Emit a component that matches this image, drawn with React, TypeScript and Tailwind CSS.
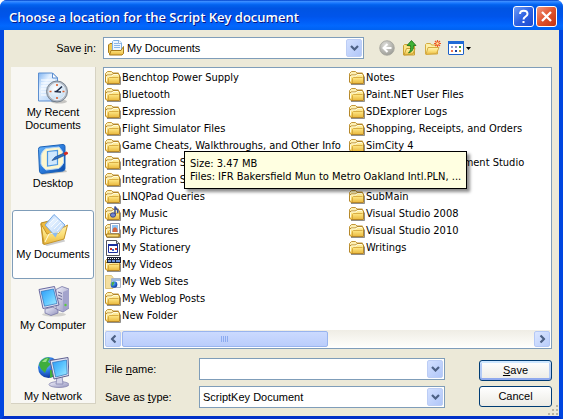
import { useState } from "react";
import type { ReactNode } from "react";

type IconProps = { className?: string };

/* Gradients shared by every icon in the dialog. */
function SharedGradients() {
  return (
    <svg className="absolute size-0" aria-hidden="true">
      <defs>
        <linearGradient id="gold" x1="0" y1="0" x2="0" y2="1">
          <stop offset="0" stopColor="#fff3b0" />
          <stop offset="0.5" stopColor="#fbe07a" />
          <stop offset="1" stopColor="#e9b73c" />
        </linearGradient>
        <linearGradient id="paper" x1="0" y1="0" x2="1" y2="1">
          <stop offset="0" stopColor="#7fb4f2" />
          <stop offset="0.35" stopColor="#e3f0ff" />
          <stop offset="1" stopColor="#a9ccf6" />
        </linearGradient>
        <linearGradient id="screen" x1="0" y1="0" x2="1" y2="1">
          <stop offset="0" stopColor="#2f9bf5" />
          <stop offset="0.5" stopColor="#5cc5ff" />
          <stop offset="1" stopColor="#a6ecff" />
        </linearGradient>
        <linearGradient id="metal" x1="0" y1="0" x2="1" y2="1">
          <stop offset="0" stopColor="#f1f1fb" />
          <stop offset="1" stopColor="#9292bd" />
        </linearGradient>
        <linearGradient id="blueEdge" x1="0" y1="0" x2="1" y2="1">
          <stop offset="0" stopColor="#6db8fb" />
          <stop offset="0.5" stopColor="#2b7bdc" />
          <stop offset="1" stopColor="#0b4aa8" />
        </linearGradient>
        <radialGradient id="clock" cx="0.4" cy="0.35" r="0.7">
          <stop offset="0" stopColor="#ffffff" />
          <stop offset="1" stopColor="#c3def5" />
        </radialGradient>
        <radialGradient id="globe" cx="0.35" cy="0.3" r="0.75">
          <stop offset="0" stopColor="#8fd0ff" />
          <stop offset="0.5" stopColor="#2d7be4" />
          <stop offset="1" stopColor="#0a2f96" />
        </radialGradient>
        <radialGradient id="greyBall" cx="0.4" cy="0.3" r="0.75">
          <stop offset="0" stopColor="#dededa" />
          <stop offset="1" stopColor="#9a9a94" />
        </radialGradient>
      </defs>
    </svg>
  );
}

function FolderShape() {
  return (
    <>
      <path d="M2 14.500h13.500v-8" stroke="#77746e" fill="none" opacity="0.800" />
      <path d="M0.500 12V3.500L2.500 1.500h4l1.500 1.500h5.500v3" fill="#fdf0b4" stroke="#c3973a" />
      <path d="M0.500 12V6.500L2 5h4.500l1.500-1.500h5l1.500 1.500v8.500h-12.500z" fill="url(#gold)" stroke="#b5872a" />
      <path d="M1.500 11.500V6.800l1-0.800h4.500l1.500-1.500h4.500" fill="none" stroke="#fffbe0" />
      <path d="M3.500 13V8.500L4.500 7.500h9" fill="none" stroke="#cf9f35" strokeWidth="0.800" />
    </>
  );
}

function SmallIcon({ children, className = "" }: { children: ReactNode; className?: string }) {
  return (
    <svg viewBox="0 0 16 16" className={`size-4 shrink-0 ${className}`} aria-hidden="true">
      {children}
    </svg>
  );
}

const FolderIcon = () => (
  <SmallIcon>
    <FolderShape />
  </SmallIcon>
);

const MusicIcon = () => (
  <SmallIcon>
    <FolderShape />
    <path d="M10 9V0.500c0.500 2.500 4.500 3 2.500 6.500" fill="none" stroke="#3c4f98" strokeWidth="1.500" />
    <ellipse cx="8" cy="9" rx="2.600" ry="2.200" fill="#7387d0" stroke="#2a3783" strokeWidth="0.800" />
  </SmallIcon>
);

const PicturesIcon = () => (
  <SmallIcon>
    <FolderShape />
    <path d="M5.500 0.500h9v10h-9z" fill="#fff" stroke="#8b95ad" />
    <path d="M7 2h6v7H7z" fill="#8fc4f5" />
    <path d="M7.500 9c0-2 0-4.500 2.500-4.500S12.500 7 12.500 9z" fill="#d5653f" />
    <path d="M1.500 14v-3h12.500v3z" fill="#f7d978" stroke="#a87b1b" />
  </SmallIcon>
);

const StationeryIcon = () => (
  <SmallIcon>
    <path d="M1.500 0.500h10l3 3v12h-13z" fill="#fff" stroke="#55555c" />
    <path d="M11.500 0.500v3h3" fill="#ddd" stroke="#55555c" />
    <path d="M3.500 4.500h9v8h-9z" fill="#fff" stroke="#1b2f9c" />
    <path d="M3 4h10v2H3z" fill="#1b2f9c" />
    <path d="M5 8h2v2H5z" fill="#c6342b" />
    <path d="M7 9h2v2H7z" fill="#3b62cf" />
    <path d="M10 8h2v2h-2z" fill="#c6342b" />
  </SmallIcon>
);

const VideosIcon = () => (
  <SmallIcon>
    <FolderShape />
    <path d="M2 0h14v6H2z" fill="#1d2233" />
    <path d="M3 1h1v1H3zM5 1h1v1H5zM7 1h1v1H7zM9 1h1v1H9zM11 1h1v1h-1zM13 1h1v1h-1z" fill="#fff" />
    <path d="M3 3h3v2H3zM7 3h3v2H7zM11 3h4v2h-4z" fill="#6b93d8" />
  </SmallIcon>
);

const WebSitesIcon = () => (
  <SmallIcon>
    <path d="M0.500 14.500V1.500h6l1.500 2v11z" fill="#f3dfa0" stroke="#dcc47c" />
    <path d="M6.500 4.500h9v9h-9z" fill="#f4f7fc" stroke="#a9b4c4" />
    <path d="M7 5h8v2H7z" fill="#9db9df" />
    <circle cx="9" cy="10.500" r="3.300" fill="url(#globe)" />
    <path d="M6.500 9c2-2 3-1 3 0s-2 1-1 3c-2 0-2-2-2-3z" fill="#4aa84a" />
  </SmallIcon>
);

const DocumentsIcon = ({ className = "" }: IconProps) => (
  <SmallIcon className={className}>
    <path d="M0.500 5L2 3.500h3v11H2.500l-2-2z" fill="#f1c954" stroke="#a87b1b" />
    <path d="M4.500 12.500v-11l1-1h5.500l2.500 2.500v9.500z" fill="#eef6ff" stroke="#7fb0e4" />
    <path d="M6 3.500h4M6 5.500h6M6 7.500h6" stroke="#8ab6e8" />
    <path d="M10.500 0.500v3h3" fill="#fff" stroke="#6b9ad2" strokeWidth="0.700" />
    <path d="M1.500 15L3 10.500h10l2.500-4v7L14 15z" fill="url(#gold)" stroke="#a87b1b" />
  </SmallIcon>
);

function LargeIcon({ children }: { children: ReactNode }) {
  return (
    <svg viewBox="0 0 32 32" className="size-8 shrink-0" aria-hidden="true">
      {children}
    </svg>
  );
}

const RecentIcon = () => (
  <LargeIcon>
    <path d="M1.500 1h14l5 5v23h-19z" fill="url(#paper)" stroke="#5d8fd0" />
    <path d="M15.500 1v5h5z" fill="#fff" stroke="#5d8fd0" />
    <path d="M4 8h14M4 11h10M4 14h7M4 17h6M4 20h6M4 23h8" stroke="#fff" strokeWidth="1.200" />
    <ellipse cx="22" cy="29.500" rx="8" ry="2" fill="#000" opacity="0.200" />
    <circle cx="20" cy="19.500" r="10.500" fill="#b3bcc8" stroke="#66727f" strokeWidth="0.800" />
    <circle cx="20" cy="19.500" r="8.200" fill="url(#clock)" stroke="#eef3f8" />
    <path d="M20 12v2M20 25v2M12.500 19.500h2M25.500 19.500h2" stroke="#e2602b" strokeWidth="1.600" />
    <path d="M25 14.500l-5.500 5M17.500 19.500l6.500 0.500" stroke="#1d2b45" strokeWidth="1.600" />
  </LargeIcon>
);

const DesktopIcon = () => (
  <LargeIcon>
    <path d="M3 30l26-3 1 2-25 3z" fill="#000" opacity="0.200" />
    <path d="M3 4L26 1.500q2 0 2 2v22q0 2-2 2.500L5 30.500q-2 0-2.500-2L1.500 6.500q0-2.300 1.500-2.500z" fill="url(#blueEdge)" stroke="#1b62b8" />
    <path d="M9 5.500L22 4q4 4 4.500 8v8q-2 4-5 5.500L9 27q-4-3-5-6v-9q1-4 5-6.500z" fill="#fdf7cf" stroke="#b9d8f5" />
    <path d="M10.500 8.500l10-1v14l-10 1.500z" fill="#cfe8fd" stroke="#4a97e2" strokeWidth="1.200" />
    <path d="M15 17.500l3-3.500 9-4 1.500 2-9 4z" fill="#2b6fc4" stroke="#15417e" strokeWidth="0.600" />
    <path d="M26.500 10l3-1.500q2 0.500 1.500 2.500L28 12.500z" fill="#d92b1f" />
  </LargeIcon>
);

const MyDocumentsIcon = () => (
  <LargeIcon>
    <path d="M6 30l21-5 1 2.500-18 4.500z" fill="#000" opacity="0.200" />
    <path d="M4 9l8-2 3 2 12 2v12L6 30z" fill="#eebc42" stroke="#b98a20" />
    <path d="M17 0.500L28 11 19 23 8 11z" fill="url(#paper)" stroke="#76a8e4" />
    <path d="M12 10l5-5M14 13l7-7M17 15l7-7M20 17l5-6" stroke="#fff" opacity="0.800" />
    <path d="M4 10l3 20.500L27 25l3.500-14-4.500 3-4 5-12 1z" fill="url(#gold)" stroke="#c6952b" />
    <path d="M8 28l4-8 10-1.500 5-5" fill="none" stroke="#fffbe2" />
    <path d="M15 19.200l6-0.800-2.500 5z" fill="#8dbcf0" />
  </LargeIcon>
);

const ComputerIcon = () => (
  <LargeIcon>
    <ellipse cx="17" cy="29.500" rx="12" ry="2" fill="#000" opacity="0.150" />
    <path d="M19 4.500l6-3 7 2.500v19l-6 4-7-3z" fill="url(#metal)" stroke="#7777a6" strokeWidth="0.800" />
    <path d="M26 7v19.500l6-4V4.500z" fill="#a3a3cc" />
    <path d="M21 7l4 1.500M21 10l4 1.500M21 13l4 1.500" stroke="#6a6a98" />
    <circle cx="28.500" cy="20" r="1.200" fill="#58cc3c" />
    <path d="M8 24l8-2 5 3v3l-7 2.500L8 28z" fill="url(#metal)" stroke="#7777a6" strokeWidth="0.800" />
    <path d="M2 4.500L17.500 1.500l4.500 18.500-16 3.500z" fill="#e4e4f3" stroke="#6969a0" />
    <path d="M4 6.500L16.500 4l3.500 14.500-12.500 2.700z" fill="url(#screen)" stroke="#2c6fb8" strokeWidth="0.700" />
  </LargeIcon>
);

const NetworkIcon = () => (
  <LargeIcon>
    <circle cx="11.500" cy="11.500" r="10.500" fill="url(#globe)" />
    <path d="M3 6q5-6 10-4l-2 4 3 2-4 4-2 5-4-4-2-4zM13 14l4 0v6l-4 2z" fill="#3fae3c" />
    <path d="M5 6q2-3 6-4l-2 4z" fill="#9be08a" />
    <ellipse cx="22" cy="28.500" rx="10" ry="3" fill="url(#metal)" stroke="#8484ae" strokeWidth="0.800" />
    <path d="M20 20h5l1 8h-7z" fill="#d3d3e8" stroke="#8484ae" strokeWidth="0.800" />
    <path d="M13 4.500L31 1.500l1 18-15 3.500z" fill="#e4e4f3" stroke="#5f6090" />
    <path d="M15.500 6.500l14-2.500 0.700 14-11.500 3z" fill="url(#screen)" stroke="#2c6fb8" strokeWidth="0.700" />
  </LargeIcon>
);

const BackIcon = () => (
  <SmallIcon>
    <circle cx="8" cy="8" r="7.300" fill="url(#greyBall)" stroke="#a3a39c" strokeWidth="0.800" />
    <path d="M8.500 4L4.500 8l4 4M5 8h7.500" stroke="#fff" strokeWidth="2" fill="none" />
  </SmallIcon>
);

const UpFolderIcon = () => (
  <SmallIcon>
    <path d="M1.500 15V5.500l1-1h3l1 1.500h6v9z" fill="#fbe384" stroke="#c9a034" />
    <path d="M2 15l2.500-6.500h8.500l-2 5.500z" fill="url(#gold)" stroke="#c9a034" />
    <path d="M9.500 0.500l4.500 5h-2.500c0 4-1 6-5 7.500 2-2 2.500-4 2-7.500H5z" fill="#3fb236" stroke="#176e17" strokeWidth="0.800" />
  </SmallIcon>
);

const NewFolderIcon = () => (
  <SmallIcon>
    <path d="M0.500 14V4.500l1-1h4l1 1.500h6V14z" fill="#fdf0a8" stroke="#d5ab42" />
    <path d="M1 14.500l2-7h11l-2.500 6z" fill="url(#gold)" stroke="#d5ab42" />
    <path d="M12.500 0v7M9 3.500h7M10 1l5 5M15 1l-5 5" stroke="#ee5522" strokeWidth="1.200" />
    <circle cx="12.500" cy="3.500" r="1.200" fill="#ffe9a0" />
  </SmallIcon>
);

const ViewsIcon = () => (
  <SmallIcon>
    <rect x="0.500" y="1.500" width="15" height="13" rx="0.500" fill="#fff" stroke="#1c60c8" />
    <path d="M0 1h16v3H0z" fill="#1f6ad6" />
    <path d="M3 6h2v2H3z" fill="#8c9fd0" />
    <path d="M7 6h2v2H7z" fill="#9a8fbb" />
    <path d="M11 6h2v2h-2z" fill="#2f9a3e" />
    <path d="M3 10h2v2H3z" fill="#ee7453" />
    <path d="M7 10h2v2H7z" fill="#1c3f9c" />
    <path d="M11 10h2v2h-2z" fill="#c5a02c" />
  </SmallIcon>
);

function Chevron({ className = "" }: IconProps) {
  return (
    <svg viewBox="0 0 9 6" className={`h-[6px] w-[9px] shrink-0 ${className}`} aria-hidden="true">
      <path d="M1 1l3.500 3.500L8 1" fill="none" stroke="#4d6185" strokeWidth="2.200" />
    </svg>
  );
}

const dropFace =
  "flex w-4 items-center justify-center rounded-[2px] border border-[#bccdf5] bg-linear-to-br from-[#d3e0ff] to-[#b0c6f8]";

const places = [
  { lines: ["My Recent", "Documents"], Icon: RecentIcon },
  { lines: ["Desktop"], Icon: DesktopIcon },
  { lines: ["My Documents"], Icon: MyDocumentsIcon },
  { lines: ["My Computer"], Icon: ComputerIcon },
  { lines: ["My Network"], Icon: NetworkIcon },
];

const columns = [
  [
    { name: "Benchtop Power Supply", Icon: FolderIcon },
    { name: "Bluetooth", Icon: FolderIcon },
    { name: "Expression", Icon: FolderIcon },
    { name: "Flight Simulator Files", Icon: FolderIcon },
    { name: "Game Cheats, Walkthroughs, and Other Info", Icon: FolderIcon },
    { name: "Integration Services", Icon: FolderIcon },
    { name: "Integration Sources", Icon: FolderIcon },
    { name: "LINQPad Queries", Icon: FolderIcon },
    { name: "My Music", Icon: MusicIcon },
    { name: "My Pictures", Icon: PicturesIcon },
    { name: "My Stationery", Icon: StationeryIcon },
    { name: "My Videos", Icon: VideosIcon },
    { name: "My Web Sites", Icon: WebSitesIcon },
    { name: "My Weblog Posts", Icon: FolderIcon },
    { name: "New Folder", Icon: FolderIcon },
  ],
  [
    { name: "Notes", Icon: FolderIcon },
    { name: "Paint.NET User Files", Icon: FolderIcon },
    { name: "SDExplorer Logs", Icon: FolderIcon },
    { name: "Shopping, Receipts, and Orders", Icon: FolderIcon },
    { name: "SimCity 4", Icon: FolderIcon },
    { name: "SQL Server Management Studio", Icon: FolderIcon },
    { name: "", Icon: FolderIcon },
    { name: "SubMain", Icon: FolderIcon },
    { name: "Visual Studio 2008", Icon: FolderIcon },
    { name: "Visual Studio 2010", Icon: FolderIcon },
    { name: "Writings", Icon: FolderIcon },
  ],
];

function TitleBar() {
  return (
    <header className="flex h-[30px] items-center justify-between rounded-t-[7px] bg-[linear-gradient(to_bottom,#0040c8_0%,#3a8cff_5%,#1a78ff_10%,#0262ee_16%,#0054e3_28%,#0055eb_55%,#005bf5_68%,#0268fe_86%,#0061f0_100%)] pr-[6px] pl-[9px]">
      <h1 className="pt-[3px] font-['Open_Sans','Noto_Sans',sans-serif] text-[13px] leading-4 font-semibold whitespace-nowrap text-white [text-shadow:1px_1px_#0a1883]">
        Choose a location for the Script Key document
      </h1>
      <div className="flex gap-[2px] pt-[3px]">
        <button
          type="button"
          aria-label="Help"
          className="flex size-[21px] items-center justify-center rounded-[3px] border border-white bg-linear-to-br from-[#6f9bf5] via-[#2f62e2] to-[#1a49cf]"
        >
          <svg viewBox="0 0 19 19" className="size-[19px]" aria-hidden="true">
            <path d="M6 7c0-4.500 7.500-4.500 7.500 0 0 2.500-4 2.500-4 5.500M9.500 14v2" fill="none" stroke="#fff" strokeWidth="2" />
          </svg>
        </button>
        <button
          type="button"
          aria-label="Close"
          className="flex size-[21px] items-center justify-center rounded-[3px] border border-white bg-linear-to-br from-[#f0957c] via-[#e0532c] to-[#c5320c]"
        >
          <svg viewBox="0 0 19 19" className="size-[19px]" aria-hidden="true">
            <path d="M5 5l9 9M14 5l-9 9" stroke="#fff" strokeWidth="2.300" />
          </svg>
        </button>
      </div>
    </header>
  );
}

function Toolbar() {
  const tool = "flex size-4 items-center justify-center";
  return (
    <div className="flex items-center gap-[7px] pl-[15px]">
      <button type="button" aria-label="Back" className={tool}>
        <BackIcon />
      </button>
      <button type="button" aria-label="Up one level" className={tool}>
        <UpFolderIcon />
      </button>
      <button type="button" aria-label="Create new folder" className={tool}>
        <NewFolderIcon />
      </button>
      <button type="button" aria-label="Views" className="flex items-center gap-[2px]">
        <ViewsIcon />
        <svg viewBox="0 0 5 3" className="h-[3px] w-[5px]" aria-hidden="true">
          <path d="M0 0h5L2.500 3z" fill="#000" />
        </svg>
      </button>
    </div>
  );
}

function PlacesBar() {
  const [active, setActive] = useState("My Documents");
  return (
    <nav
      aria-label="Places"
      className="row-span-2 mb-3 flex h-[337px] flex-col gap-[2px] overflow-hidden border-r border-b border-[#d6d2c2] bg-[#f8f7f3] px-px pt-px leading-[13px]"
    >
      {places.map(({ lines, Icon }) => {
        const key = lines.join(" ");
        const state = key === active ? "border-[#7f9db9] bg-white" : "border-transparent";
        return (
          <button
            key={key}
            type="button"
            onClick={() => setActive(key)}
            className={`flex h-[69px] shrink-0 flex-col items-center gap-[2px] rounded-[3px] border pt-[3px] ${state}`}
          >
            <Icon />
            <span>
              {lines.map((line) => (
                <span key={line} className="block whitespace-nowrap">
                  {line}
                </span>
              ))}
            </span>
          </button>
        );
      })}
    </nav>
  );
}

function ScrollBar() {
  const end =
    "flex h-4 w-4 shrink-0 items-center justify-center rounded-[2px] border border-[#b4c8f6] bg-linear-to-br from-[#dbe6ff] to-[#b9cdfa]";
  return (
    <div className="flex h-[17px] items-center justify-between bg-linear-to-b from-[#efede5] to-[#fefefb]">
      <button type="button" aria-label="Scroll left" className={end}>
        <Chevron className="rotate-90" />
      </button>
      <div className="flex flex-1 px-px">
        <div className="flex h-4 w-1/2 items-center justify-center gap-px rounded-[2px] border border-[#98b4ee] bg-linear-to-b from-[#cbdafe] to-[#bacdfb]">
          <i className="h-[6px] w-px bg-[#8cabf0]" />
          <i className="h-[6px] w-px bg-[#8cabf0]" />
          <i className="h-[6px] w-px bg-[#8cabf0]" />
          <i className="h-[6px] w-px bg-[#8cabf0]" />
        </div>
      </div>
      <button type="button" aria-label="Scroll right" className={end}>
        <Chevron className="-rotate-90" />
      </button>
    </div>
  );
}

function FileList() {
  return (
    <section
      aria-label="Folders"
      className="relative flex h-[282px] min-w-0 flex-col justify-between border border-[#7f9db9] bg-white p-px font-['DejaVu_Sans_Condensed','Noto_Sans',sans-serif] leading-[17px]"
    >
      <div className="flex overflow-hidden">
        {columns.map((items, i) => (
          <ul key={i} className="w-[244px] shrink-0">
            {items.map(({ name, Icon }) => (
              <li key={name} className="flex h-[17px]">
                <button type="button" className="flex items-center gap-px whitespace-nowrap">
                  <Icon />
                  {name}
                </button>
              </li>
            ))}
          </ul>
        ))}
      </div>
      <ScrollBar />
      <div
        role="tooltip"
        className="absolute top-[83px] left-20 border border-black bg-[#ffffe1] px-[5px] py-[5px] leading-[13px] whitespace-nowrap shadow-[3px_3px_3px_rgba(0,0,0,0.45)]"
      >
        <p>Size: 3.47 MB</p>
        <p>Files: IFR Bakersfield Mun to Metro Oakland Intl.PLN, ...</p>
      </div>
    </section>
  );
}

function FileFields() {
  const [name, setName] = useState("");
  const face = "h-[21px] rounded-[3px] border border-[#003c74] leading-[13px]";
  return (
    <div className="flex min-w-0 items-center pt-[9px] pb-2">
      <div className="grid flex-1 grid-cols-[94px_1fr] items-center gap-y-[6px] pl-[2px]">
        <label htmlFor="file-name">
          File <u>n</u>ame:
        </label>
        <div className="flex h-[22px] border border-[#7f9db9] bg-white p-px">
          <input
            id="file-name"
            value={name}
            onChange={(e) => setName(e.target.value)}
            className="min-w-0 flex-1 px-[2px] outline-none"
          />
          <button type="button" aria-label="Earlier names" className={dropFace}>
            <Chevron />
          </button>
        </div>
        <label htmlFor="file-type">
          Save as <u>t</u>ype:
        </label>
        <div className="relative flex h-[22px] border border-[#7f9db9] bg-white p-px">
          <select id="file-type" className="flex-1 appearance-none px-[2px] outline-none">
            <option>ScriptKey Document</option>
          </select>
          <span className={`pointer-events-none absolute inset-y-px right-px ${dropFace}`}>
            <Chevron />
          </span>
        </div>
      </div>
      <div className="ml-[34px] flex w-[73px] flex-col gap-[5px]">
        <button
          type="submit"
          className={`${face} bg-linear-to-b from-white to-[#ecebe5] shadow-[inset_0_2px_#cee7ff,inset_0_-2px_#8fa9ee,inset_2px_0_#b4ccf6,inset_-2px_0_#b4ccf6]`}
        >
          <u>S</u>ave
        </button>
        <button type="button" className={`${face} bg-linear-to-b from-white to-[#ecebe5]`}>
          Cancel
        </button>
      </div>
    </div>
  );
}

export default function App() {
  return (
    <main className="min-h-screen bg-white font-['Liberation_Sans',Arial,sans-serif] text-[11px] text-black">
      <SharedGradients />
      <form
        onSubmit={(e) => e.preventDefault()}
        className="flex min-h-screen flex-col rounded-t-[7px] bg-[#0046e0]"
      >
        <TitleBar />
        <div className="relative flex-1 border-x-4 border-b-4 border-x-[#0046e0] border-b-[#0030c8] bg-[#ece9d8] pt-[7px] pr-[7px] pl-[7px]">
          <div className="grid grid-cols-[85px_minmax(0,1fr)] gap-x-[7px]">
            <label htmlFor="save-in" className="self-center pb-2 text-right">
              Save <u>i</u>n:
            </label>
            <div className="mb-2 flex">
              <div className="relative flex h-[22px] w-[261px] border border-[#7f9db9] bg-white p-px">
                <DocumentsIcon className="pointer-events-none absolute top-[2px] left-1" />
                <select id="save-in" className="flex-1 appearance-none pl-[22px] outline-none">
                  <option>My Documents</option>
                </select>
                <span className={`pointer-events-none absolute inset-y-px right-px ${dropFace}`}>
                  <Chevron />
                </span>
              </div>
              <Toolbar />
            </div>
            <PlacesBar />
            <FileList />
            <FileFields />
          </div>
          <svg viewBox="0 0 12 12" className="absolute right-0 bottom-0 size-3" aria-hidden="true">
            <path d="M9 1h2v2H9zM5 5h2v2H5zM9 5h2v2H9zM1 9h2v2H1zM5 9h2v2H5zM9 9h2v2H9z" fill="#b8b4a2" />
          </svg>
        </div>
      </form>
    </main>
  );
}
